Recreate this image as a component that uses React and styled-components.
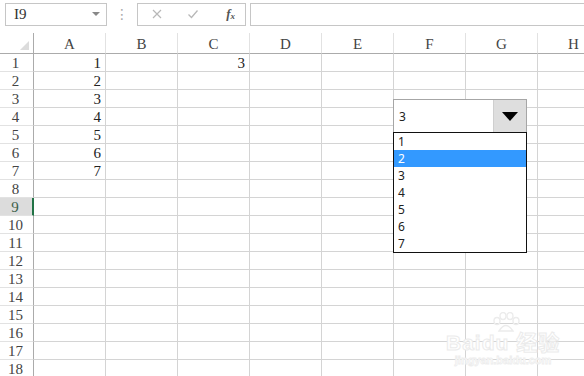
import styled, { createGlobalStyle } from 'styled-components';

const COLS = ['A', 'B', 'C', 'D', 'E', 'F', 'G', 'H'];
const ROWS = Array.from({ length: 18 }, (_, i) => i + 1);
const CELLS = { 'A1': 1, 'A2': 2, 'A3': 3, 'A4': 4, 'A5': 5, 'A6': 6, 'A7': 7, 'C1': 3 };
const OPTIONS = [1, 2, 3, 4, 5, 6, 7];

export default function App() {
  return (
    <>
      <Global />
      <Window>
        <Toolbar>
          <NameBox>
            <span>I9</span>
            <SmallArrow />
          </NameBox>
          <Dots>⋮</Dots>
          <FormulaButtons>
            <ToolIcon viewBox="0 0 12 12">
              <path d="M2 2 L10 10 M10 2 L2 10" stroke="#b8b8b8" strokeWidth="1.2" />
            </ToolIcon>
            <ToolIcon viewBox="0 0 12 12">
              <path d="M1.5 6.5 L4.5 9.5 L10.5 2.5" stroke="#b8b8b8" strokeWidth="1.3" fill="none" />
            </ToolIcon>
            <Fx>
              f<sub>x</sub>
            </Fx>
          </FormulaButtons>
          <FormulaInput />
        </Toolbar>
        <Sheet>
          <Corner>
            <CornerMark />
          </Corner>
          {COLS.map((c) => (
            <ColHead key={c}>{c}</ColHead>
          ))}
          {ROWS.map((r) => (
            <Row key={r} r={r} />
          ))}
        </Sheet>
        <Combo>
          <ComboField>
            <ComboValue>3</ComboValue>
            <ComboButton>
              <svg width="16" height="9" viewBox="0 0 16 9">
                <path d="M0 0 H16 L8 9 Z" fill="#000" />
              </svg>
            </ComboButton>
          </ComboField>
          <List>
            {OPTIONS.map((o) => (
              <Option key={o} $active={o === 2}>
                {o}
              </Option>
            ))}
          </List>
        </Combo>
        <Watermark>
          <Paw viewBox="0 0 30 20">
            <ellipse cx="6" cy="9" rx="3" ry="3.5" />
            <ellipse cx="12" cy="4" rx="3" ry="3.5" />
            <ellipse cx="19" cy="4" rx="3" ry="3.5" />
            <ellipse cx="25" cy="9" rx="3" ry="3.5" />
            <path d="M8 19 Q15 8 22 19 Z" />
          </Paw>
          <Brand>
            Bai<span>du</span> 经验
          </Brand>
          <Domain>jingyan.baidu.com</Domain>
        </Watermark>
      </Window>
    </>
  );
}

function Row({ r }) {
  return (
    <>
      <RowHead $active={r === 9}>{r}</RowHead>
      {COLS.map((c) => (
        <Cell key={c}>{CELLS[c + r] ?? ''}</Cell>
      ))}
    </>
  );
}

const Global = createGlobalStyle`
  html, body { margin: 0; padding: 0; background: #fff; }
  body { font-family: "Liberation Serif", "DejaVu Serif", serif; color: #222; }
`;

const Window = styled.div`
  position: relative;
  width: 584px;
  height: 376px;
  overflow: hidden;
  background: #fff;
`;

const Toolbar = styled.div`
  display: flex;
  align-items: center;
  height: 24px;
  padding: 2px 0 0 5px;
  margin-bottom: 7px;
`;

const NameBox = styled.div`
  box-sizing: border-box;
  display: flex;
  align-items: center;
  justify-content: space-between;
  width: 102px;
  height: 23px;
  padding: 0 6px 0 8px;
  border: 1px solid #c6c6c6;
  font-size: 15px;
  color: #333;
`;

const SmallArrow = styled.span`
  width: 0;
  height: 0;
  border-left: 4px solid transparent;
  border-right: 4px solid transparent;
  border-top: 4px solid #888;
`;

const Dots = styled.span`
  width: 30px;
  text-align: center;
  color: #aaa;
  font-family: "DejaVu Sans", sans-serif;
  font-size: 14px;
`;

const FormulaButtons = styled.div`
  box-sizing: border-box;
  display: flex;
  align-items: center;
  justify-content: space-between;
  width: 109px;
  height: 23px;
  padding: 0 10px 0 13px;
  border: 1px solid #c6c6c6;
`;

const ToolIcon = styled.svg`
  width: 12px;
  height: 12px;
  &:nth-child(2) { margin-left: 8px; }
`;

const Fx = styled.span`
  font-family: "Liberation Serif", serif;
  font-style: italic;
  font-weight: bold;
  font-size: 13px;
  color: #555;
  margin-left: 12px;
  sub { font-size: 9px; vertical-align: -1px; }
`;

const FormulaInput = styled.div`
  flex: 1;
  height: 23px;
  margin-left: 4px;
  box-sizing: border-box;
  border: 1px solid #c6c6c6;
  border-right: none;
`;

const Sheet = styled.div`
  display: grid;
  grid-template-columns: 34px repeat(8, 72px);
  grid-template-rows: 21px repeat(18, 18px);
`;

const HeadBase = styled.div`
  box-sizing: border-box;
  display: flex;
  align-items: center;
  background: #fff;
  color: #444;
  font-size: 15px;
`;

const Corner = styled(HeadBase)`
  position: relative;
  border-right: 1px solid #ababab;
  border-bottom: 1px solid #ababab;
`;

const CornerMark = styled.span`
  position: absolute;
  right: 4px;
  bottom: 3px;
  width: 0;
  height: 0;
  border-left: 9px solid transparent;
  border-bottom: 9px solid #dcdcdc;
`;

const ColHead = styled(HeadBase)`
  justify-content: center;
  padding-top: 3px;
  border-right: 1px solid #e2e2e2;
  border-bottom: 1px solid #ababab;
`;

const RowHead = styled(HeadBase)`
  justify-content: center;
  padding: 2px 2px 0 0;
  border-bottom: 1px solid #e2e2e2;
  border-right: ${(p) => (p.$active ? '2px solid #217346' : '1px solid #ababab')};
  background: ${(p) => (p.$active ? '#dcdcdc' : '#fff')};
  color: ${(p) => (p.$active ? '#3b5f4a' : '#444')};
`;

const Cell = styled.div`
  box-sizing: border-box;
  display: flex;
  align-items: center;
  justify-content: flex-end;
  padding: 2px 4px 0 0;
  border-right: 1px solid #d4d4d4;
  border-bottom: 1px solid #d4d4d4;
  font-size: 15px;
  color: #222;
`;

const Combo = styled.div`
  position: absolute;
  left: 393px;
  top: 99px;
  width: 134px;
  font-family: "Noto Sans", "DejaVu Sans", sans-serif;
  font-size: 12px;
`;

const ComboField = styled.div`
  box-sizing: border-box;
  display: flex;
  height: 33px;
  background: #fff;
  border: 1px solid #a6a6a6;
  border-bottom: none;
`;

const ComboValue = styled.div`
  flex: 1;
  display: flex;
  align-items: center;
  padding-left: 5px;
  color: #222;
`;

const ComboButton = styled.div`
  display: flex;
  align-items: center;
  justify-content: center;
  width: 32px;
  background: #dedede;
  border-left: 1px solid #cfcfcf;
`;

const List = styled.div`
  box-sizing: border-box;
  display: flex;
  flex-direction: column;
  background: #fff;
  border: 1px solid #111;
`;

const Option = styled.div`
  height: 17px;
  line-height: 17px;
  padding-left: 4px;
  background: ${(p) => (p.$active ? '#3399ff' : 'transparent')};
  color: ${(p) => (p.$active ? '#fff' : '#222')};
`;

const Watermark = styled.div`
  position: absolute;
  left: 446px;
  top: 312px;
  display: flex;
  flex-direction: column;
  align-items: center;
  pointer-events: none;
`;

const Paw = styled.svg`
  width: 30px;
  height: 20px;
  fill: none;
  stroke: #ececec;
  stroke-width: 1.4;
  margin-left: 6px;
`;

const Brand = styled.div`
  margin-top: -6px;
  font-family: "Liberation Sans", "Noto Sans CJK SC", sans-serif;
  font-size: 21px;
  font-weight: bold;
  letter-spacing: 1px;
  color: #fff;
  -webkit-text-stroke: 1px #ebebeb;
`;

const Domain = styled.div`
  margin-top: -2px;
  font-family: "Liberation Sans", sans-serif;
  font-size: 11px;
  font-weight: bold;
  color: #fff;
  -webkit-text-stroke: 0.8px #ededed;
`;
